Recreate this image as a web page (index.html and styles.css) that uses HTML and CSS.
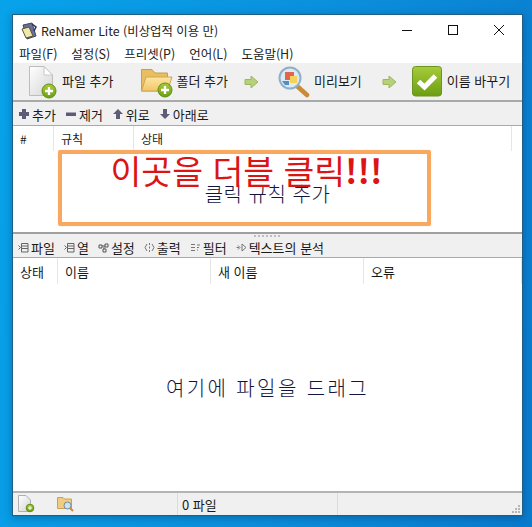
FILE: index.html
```html
<!DOCTYPE html>
<html lang="ko">
<head>
  <meta charset="UTF-8" />
  <meta name="viewport" content="width=device-width, initial-scale=1.0" />
  <title>ReNamer Lite</title>
  <link rel="stylesheet" href="styles.css">
</head>
<body>
  <svg class="defs" width="0" height="0">
    <defs>
      <linearGradient id="page" x1="0" y1="0" x2="1" y2="1">
        <stop offset="0" stop-color="#ffffff" />
        <stop offset="1" stop-color="#d4d4d4" />
      </linearGradient>
      <linearGradient id="folder" x1="0" y1="0" x2="0" y2="1">
        <stop offset="0" stop-color="#fde6a4" />
        <stop offset="1" stop-color="#f3c566" />
      </linearGradient>
      <linearGradient id="green" x1="0" y1="0" x2="0" y2="1">
        <stop offset="0" stop-color="#a6cc3a" />
        <stop offset="1" stop-color="#6c9e12" />
      </linearGradient>
      <g id="plus-badge">
        <circle cx="0" cy="0" r="7" fill="url(#green)" stroke="#5f8f14" />
        <path d="M-4 0H4M0-4V4" stroke="#fff" stroke-width="2.4" />
      </g>
      <path id="next-arrow" d="M1 4.5H7V1L14 7L7 13V9.5H1Z" fill="#b7d07a" stroke="#9db761" />
    </defs>
  </svg>

  <div class="window">
    <div class="titlebar">
      <svg class="app-icon" width="18" height="18" viewBox="0 0 18 18">
        <path d="M3 3L12 1L16 14L7 17Z" fill="#6a6f9a" stroke="#3f4468" />
        <path d="M2 7L9 5L13 14L6 16Z" fill="#f2e6a8" stroke="#55553a" />
        <path d="M12 2L16 5L14 9" fill="none" stroke="#2c3050" stroke-width="1.5" />
      </svg>
      <span class="title">ReNamer Lite (비상업적 이용 만)</span>
      <div class="caption-buttons">
        <svg width="46" height="30" viewBox="0 0 46 30"><path d="M18 14.5H28" stroke="#111" /></svg>
        <svg width="46" height="30" viewBox="0 0 46 30"><rect x="18.5" y="9.5" width="9" height="9" fill="none" stroke="#111" /></svg>
        <svg width="46" height="30" viewBox="0 0 46 30"><path d="M18 9L28 19M28 9L18 19" stroke="#111" /></svg>
      </div>
    </div>

    <div class="menubar">
      <span>파일(F)</span>
      <span>설정(S)</span>
      <span>프리셋(P)</span>
      <span>언어(L)</span>
      <span>도움말(H)</span>
    </div>

    <div class="toolbar">
      <div class="tool tool-file">
        <svg width="30" height="34" viewBox="0 0 30 34">
          <path d="M1.5 1.5H16L24.5 10V30.5H1.5Z" fill="url(#page)" stroke="#bdbdbd" />
          <path d="M16 1.5V10H24.5Z" fill="#fff" stroke="#c8c8c8" />
          <use href="#plus-badge" x="21" y="26" />
        </svg>
        <span>파일 추가</span>
      </div>
      <div class="tool tool-folder">
        <svg width="34" height="34" viewBox="0 0 34 34">
          <path d="M1.5 4.5H12L15 8H27.5V26H1.5Z" fill="#e9bd62" stroke="#c99e48" />
          <path d="M1.5 26L6 12H32L27.5 26Z" fill="url(#folder)" stroke="#d0a650" />
          <use href="#plus-badge" x="25" y="25" />
        </svg>
        <span>폴더 추가</span>
      </div>
      <svg class="next next-first" width="15" height="14" viewBox="0 0 15 14"><use href="#next-arrow" /></svg>
      <div class="tool tool-preview">
        <svg width="32" height="32" viewBox="0 0 32 32">
          <path d="M19 20L29 29" stroke="#c98b35" stroke-width="4.5" stroke-linecap="round" />
          <circle cx="12" cy="12" r="10.5" fill="#dceaf5" stroke="#8fb0c9" stroke-width="2" />
          <rect x="7" y="6" width="9" height="8" fill="#e0654a" />
          <rect x="12" y="10" width="7" height="7" fill="#f5d25a" />
          <path d="M4 15H11V19H7Z" fill="#4f8fc4" />
        </svg>
        <span>미리보기</span>
      </div>
      <svg class="next next-second" width="15" height="14" viewBox="0 0 15 14"><use href="#next-arrow" /></svg>
      <div class="tool tool-rename">
        <svg width="30" height="31" viewBox="0 0 30 31">
          <rect x="0.5" y="0.5" width="29" height="29.5" rx="3" fill="url(#green)" stroke="#6d9420" />
          <path d="M6.5 15.5L12.5 21L23.5 10" fill="none" stroke="#fff" stroke-width="5" />
        </svg>
        <span>이름 바꾸기</span>
      </div>
    </div>

    <div class="subbar">
      <span class="sub-item">
        <svg width="12" height="12" viewBox="0 0 12 12"><path d="M4 1H8V4H11V8H8V11H4V8H1V4H4Z" fill="#5c5c78" /></svg>추가
      </span>
      <span class="sub-item">
        <svg width="12" height="12" viewBox="0 0 12 12"><rect x="1" y="4.5" width="10" height="3.5" fill="#5c5c78" /></svg>제거
      </span>
      <span class="sub-item">
        <svg width="12" height="12" viewBox="0 0 12 12"><path d="M6 1L11 6H8V11H4V6H1Z" fill="#5c5c78" /></svg>위로
      </span>
      <span class="sub-item">
        <svg width="12" height="12" viewBox="0 0 12 12"><path d="M6 11L11 6H8V1H4V6H1Z" fill="#5c5c78" /></svg>아래로
      </span>
    </div>

    <div class="rules">
      <div class="list-header">
        <span class="col col-num">#</span>
        <span class="col col-rule">규칙</span>
        <span class="col col-state">상태</span>
      </div>
      <div class="rules-body">클릭 규칙 추가</div>
      <div class="callout">이곳을 더블 클릭<b>!!!</b></div>
    </div>

    <div class="tabsbar">
      <div class="grip"></div>
      <span class="sub-item">
        <svg width="11" height="11" viewBox="0 0 11 11"><path d="M3.5 1.5H10V10H3.5ZM3.5 4H10M3.5 6.5H10M0.5 3.5L2.5 5.5L0.5 7.5" fill="none" stroke="#666" /></svg>파일
      </span>
      <span class="sub-item">
        <svg width="11" height="11" viewBox="0 0 11 11"><path d="M3.5 1.5H10V10H3.5ZM3.5 4H10M3.5 6.5H10M0.5 3.5L2.5 5.5L0.5 7.5" fill="none" stroke="#666" /></svg>열
      </span>
      <span class="sub-item">
        <svg width="11" height="11" viewBox="0 0 11 11"><path d="M1 3H4V6H1ZM7 2H10V5H7ZM5 7H8V10H5ZM4 4H7M6 5V7" fill="none" stroke="#555" /></svg>설정
      </span>
      <span class="sub-item">
        <svg width="11" height="11" viewBox="0 0 11 11"><path d="M3 2L1 5.5L3 9M8 2L10 5.5L8 9M5.5 1V3M5.5 4.5V6.5M5.5 8V10" fill="none" stroke="#777" /></svg>출력
      </span>
      <span class="sub-item">
        <svg width="11" height="11" viewBox="0 0 11 11"><path d="M1 2.5H5M1 5.5H5M1 8.5H5M7 3H10M7 5.5H9M7 8H8" fill="none" stroke="#777" /></svg>필터
      </span>
      <span class="sub-item">
        <svg width="11" height="11" viewBox="0 0 11 11"><path d="M0.5 5.5H3M2 3.5L4 5.5L2 7.5M6 2V9L10 5.5Z" fill="none" stroke="#777" /></svg>텍스트의 분석
      </span>
    </div>

    <div class="files">
      <div class="list-header list-header-tall">
        <span class="col col-fstate">상태</span>
        <span class="col col-name">이름</span>
        <span class="col col-new">새 이름</span>
        <span class="col col-err">오류</span>
      </div>
      <div class="files-body">여기에 파일을 드래그</div>
    </div>

    <div class="statusbar">
      <div class="status-cell status-file">
        <svg width="17" height="18" viewBox="0 0 17 18">
          <path d="M0.5 0.5H8L12.5 5V16.5H0.5Z" fill="url(#page)" stroke="#b0b0b0" />
          <circle cx="12" cy="13" r="3.8" fill="url(#green)" stroke="#5f8f14" />
          <path d="M10 13H14M12 11V15" stroke="#fff" />
        </svg>
      </div>
      <div class="status-cell status-folder">
        <svg width="17" height="16" viewBox="0 0 17 16">
          <path d="M0.5 1.5H6L7.500 3H14.500V12.500H0.500Z" fill="#f0cc80" stroke="#c5a25a" />
          <circle cx="10.500" cy="9.500" r="3.500" fill="#cfe0ee" stroke="#6f8ba5" />
          <path d="M13 12L16 15" stroke="#c98b35" stroke-width="2" />
        </svg>
      </div>
      <div class="status-cell status-count">0 파일</div>
      <div class="status-cell status-rest"></div>
      <div class="resize-grip">
        <i></i><i></i><i></i><i></i><i></i><i></i>
      </div>
    </div>
  </div>
</body>
</html>
```

FILE: styles.css
```css
* {
  box-sizing: border-box;
}

html,
body {
  margin: 0;
  height: 527px;
  overflow: hidden;
}

body {
  padding: 14px 9px 0 12px;
  background: linear-gradient(100deg, #07a3ea 0%, #0b8fdc 55%, #0a7bcd 100%);
  font-family: "Noto Sans CJK KR", "Liberation Sans", sans-serif;
  font-size: 13px;
  color: #1a1a1a;
}

.defs {
  position: absolute;
}

.window {
  position: relative;
  width: 511px;
  height: 502px;
  display: flex;
  flex-direction: column;
  background: #fff;
  border: 1px solid #1f5f86;
  box-shadow: 0 2px 8px rgba(0, 40, 80, 0.35);
}

.titlebar {
  height: 31px;
  flex: none;
  display: flex;
  align-items: center;
  padding-left: 7px;
}

.app-icon {
  margin-right: 3px;
}

.title {
  flex: 1;
  font-size: 12.4px;
  color: #222;
}

.caption-buttons {
  display: flex;
}

.menubar {
  height: 17px;
  flex: none;
  display: flex;
  gap: 14px;
  align-items: center;
  padding: 0 0 2px 6px;
  font-size: 12.5px;
  color: #222;
}

.toolbar {
  height: 39px;
  flex: none;
  display: flex;
  align-items: center;
  background: #f0f0f0;
  border-bottom: 2px solid #a9a9a9;
}

.tool {
  display: flex;
  align-items: center;
  gap: 4px;
}

.tool span {
  padding-bottom: 2px;
}

.tool-file {
  margin-left: 15px;
}

.tool-folder {
  margin-left: 27px;
  gap: 2px;
}

.next-first {
  margin-left: 16px;
}

.tool-preview {
  margin-left: 19px;
}

.next-second {
  margin-left: 20px;
}

.tool-rename {
  margin-left: 15px;
  gap: 5px;
}

.subbar {
  height: 24px;
  flex: none;
  display: flex;
  align-items: center;
  gap: 9px;
  padding: 1px 0 0 5px;
  background: #f0f0f0;
  border-bottom: 1px solid #a9a9a9;
}

.sub-item {
  display: flex;
  align-items: center;
  gap: 2px;
}

.rules {
  position: relative;
  height: 108px;
  flex: none;
  display: flex;
  flex-direction: column;
  border-bottom: 2px solid #a0a0a0;
}

.list-header {
  height: 25px;
  flex: none;
  display: flex;
  align-items: center;
  background: #fff;
  font-size: 12px;
}

.list-header-tall {
  height: 26px;
  font-size: 13px;
}

.col {
  height: 100%;
  display: flex;
  align-items: center;
  padding-left: 7px;
  border-right: 1px solid #e6e6e6;
}

.col-num {
  width: 41px;
}

.col-rule {
  width: 80px;
}

.col-state {
  width: 378px;
}

.rules-body {
  flex: 1;
  display: flex;
  justify-content: center;
  padding-top: 33px;
  font-size: 20px;
  font-weight: 300;
  line-height: 20px;
  letter-spacing: 0.5px;
  color: #10143f;
}

.callout {
  position: absolute;
  left: 45px;
  top: 24px;
  width: 373px;
  height: 76px;
  padding: 2px 0 0 4px;
  border: 4px solid #f9a95f;
  border-radius: 2px;
  box-shadow: 0 0 1px #f9c08c;
  text-align: center;
  font-size: 33.5px;
  line-height: 28px;
  color: #dc1414;
}

.tabsbar {
  position: relative;
  height: 24px;
  flex: none;
  display: flex;
  align-items: center;
  gap: 9px;
  padding: 3px 0 0 5px;
  background: #f0f0f0;
  border-bottom: 1px solid #a9a9a9;
}

.grip {
  position: absolute;
  left: 241px;
  top: 1px;
  width: 27px;
  height: 2px;
  background: repeating-linear-gradient(90deg, #bdbdbd 0 2px, transparent 2px 4px);
}

.files {
  flex: 1;
  display: flex;
  flex-direction: column;
  border-bottom: 2px solid #b4b4b4;
}

.col-fstate {
  width: 45px;
}

.col-name {
  width: 153px;
}

.col-new {
  width: 153px;
}

.col-err {
  width: 158px;
}

.files-body {
  flex: 1;
  display: flex;
  justify-content: center;
  padding-top: 92px;
  font-size: 20px;
  font-weight: 300;
  line-height: 24px;
  letter-spacing: 2.4px;
  color: #10143f;
}

.statusbar {
  position: relative;
  height: 22px;
  flex: none;
  display: flex;
  background: #f0f0f0;
}

.status-cell {
  display: flex;
  align-items: center;
  border-right: 1px solid #dcdcdc;
}

.status-file {
  width: 44px;
  padding-left: 5px;
  border-right: none;
}

.status-folder {
  width: 121px;
}

.status-count {
  width: 160px;
  padding-left: 4px;
}

.status-rest {
  flex: 1;
  border-right: none;
}

.resize-grip {
  position: absolute;
  right: 2px;
  bottom: 2px;
  width: 8px;
  height: 8px;
  display: grid;
  grid-template-columns: repeat(3, 2px);
  grid-auto-rows: 2px;
  gap: 1px;
  direction: rtl;
}

.resize-grip i {
  background: #b5b5b5;
}

.resize-grip i:nth-child(1) {
  grid-row: 1;
  grid-column: 1;
}

.resize-grip i:nth-child(2),
.resize-grip i:nth-child(3) {
  grid-row: 2;
}

.resize-grip i:nth-child(4),
.resize-grip i:nth-child(5),
.resize-grip i:nth-child(6) {
  grid-row: 3;
}
```
